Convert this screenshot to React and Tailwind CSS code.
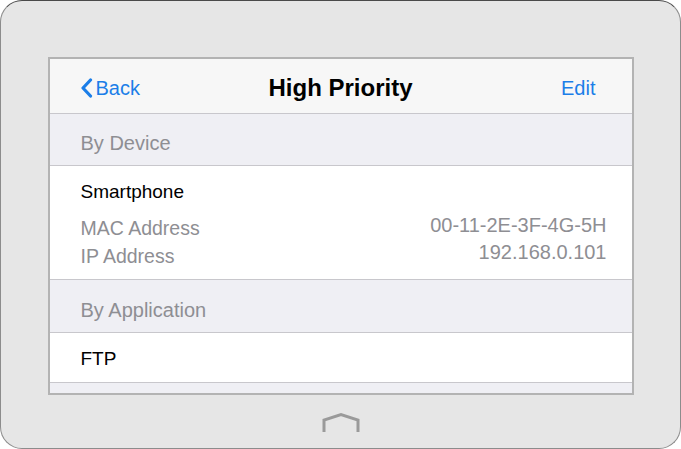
export default function App() {
  const font = { fontFamily: '"Liberation Sans", Arial, sans-serif' };

  return (
    <div className="w-[681px] h-[449px] bg-white" style={font}>
      <div className="w-full h-full rounded-[22px] border border-[#8c8c8c] border-t-[#4a4a4a] bg-[#e6e6e6] flex flex-col items-center pt-[56px]">
        {/* screen */}
        <div className="w-[586px] h-[338px] border-2 border-[#b3b3b3] bg-[#efeff4] flex flex-col overflow-hidden">
          {/* nav bar */}
          <div className="h-[55px] shrink-0 bg-[#f7f7f7] border-b border-[#c8c7cc] grid grid-cols-[1fr_auto_1fr] items-center px-[30px] pt-[4px]">
            <div className="flex items-center text-[#1b7ee8] text-[20px] gap-[3px]">
              <svg width="13" height="20" viewBox="0 0 13 20">
                <path d="M10.5 2 L3 10 L10.5 18" fill="none" stroke="#1b7ee8" strokeWidth="3.2" strokeLinecap="round" strokeLinejoin="round" />
              </svg>
              <span>Back</span>
            </div>
            <div className="text-center text-[24px] font-bold text-black">High Priority</div>
            <div className="text-right text-[#1b7ee8] text-[20px] pr-[6px]">Edit</div>
          </div>

          {/* By Device */}
          <div className="h-[52px] shrink-0 flex items-center px-[31px] pt-[6px] text-[20px] text-[#8e8e93] border-b border-[#c8c7cc]">
            By Device
          </div>
          <div className="h-[114px] shrink-0 bg-white border-b border-[#c8c7cc] flex flex-col pl-[31px] pr-[25px] pt-[14px]">
            <div className="text-[19px] text-black leading-[24px]">Smartphone</div>
            <div className="flex justify-between text-[19.5px] text-[#8e8e93] leading-[28px] mt-[10px]">
              <div className="flex flex-col">
                <span>MAC Address</span>
                <span>IP Address</span>
              </div>
              <div className="flex flex-col items-end -mt-[2px] text-[20px] leading-[27px]">
                <span>00-11-2E-3F-4G-5H</span>
                <span>192.168.0.101</span>
              </div>
            </div>
          </div>

          {/* By Application */}
          <div className="h-[53px] shrink-0 flex items-center px-[31px] pt-[8px] text-[20px] text-[#8e8e93] border-b border-[#c8c7cc]">
            By Application
          </div>
          <div className="h-[50px] shrink-0 bg-white border-b border-[#c8c7cc] flex items-center px-[31px] pt-[4px] text-[19px] text-black">
            FTP
          </div>
          <div className="flex-1 bg-[#efeff4]" />
        </div>

        {/* home button */}
        <div className="mt-[17px]">
          <svg width="40" height="22" viewBox="0 0 40 22">
            <path d="M3 20 L3 8 L20 2.5 L37 8 L37 20" fill="none" stroke="#9a9a9a" strokeWidth="3" strokeLinejoin="miter" />
          </svg>
        </div>
      </div>
    </div>
  );
}
